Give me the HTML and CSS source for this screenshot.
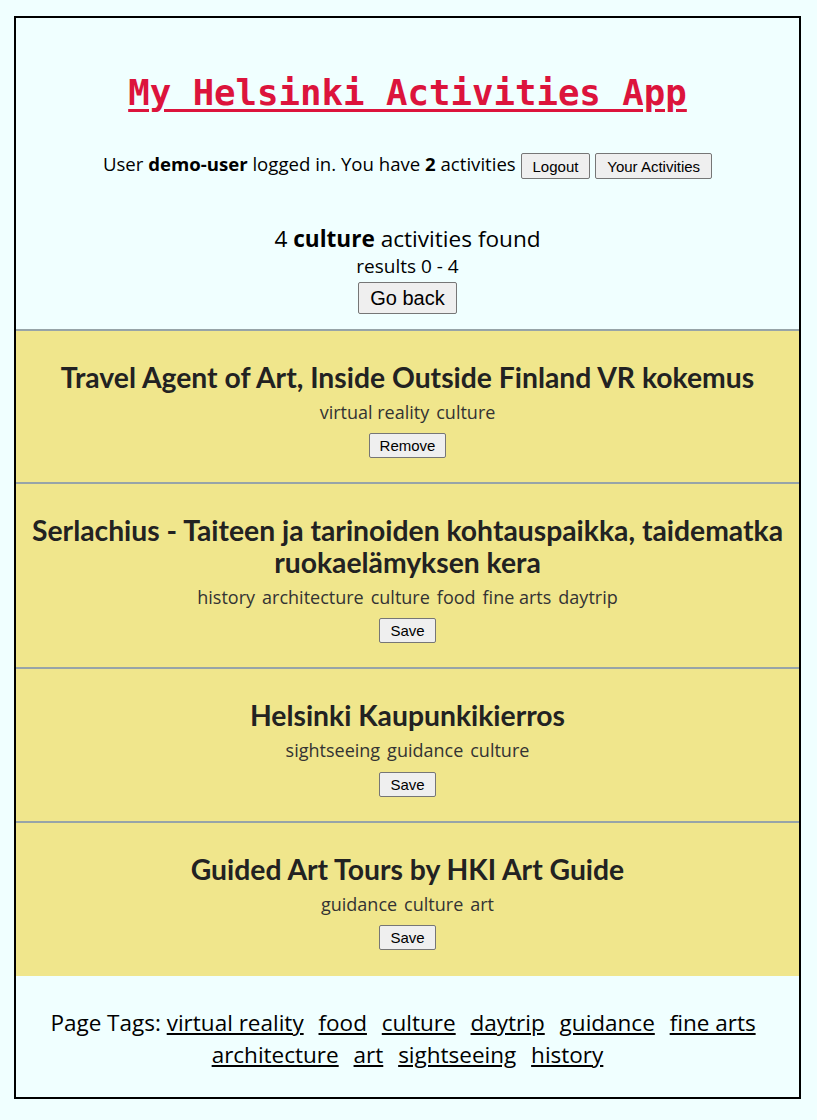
FILE: index.html
```html
<!DOCTYPE html>
<html>
<head>
<meta charset="utf-8">
<link rel="stylesheet" href="styles.css">
</head>
<body>
<div class="app">
  <header class="top">
    <h1 class="title"><a href="#">My Helsinki Activities App</a></h1>
    <p class="userline">User <b>demo-user</b> logged in. You have <b>2</b> activities <button class="btn">Logout</button> <button class="btn">Your Activities</button></p>
    <div class="found">4 <b>culture</b> activities found</div>
    <div class="results">results 0 - 4</div>
    <button class="btn big">Go back</button>
  </header>
  <section class="card">
    <h2>Travel Agent of Art, Inside Outside Finland VR kokemus</h2>
    <div class="tags"><span>virtual reality</span><span>culture</span></div>
    <button class="btn">Remove</button>
  </section>
  <section class="card">
    <h2>Serlachius - Taiteen ja tarinoiden kohtauspaikka, taidematka ruokaelämyksen kera</h2>
    <div class="tags"><span>history</span><span>architecture</span><span>culture</span><span>food</span><span>fine arts</span><span>daytrip</span></div>
    <button class="btn">Save</button>
  </section>
  <section class="card">
    <h2>Helsinki Kaupunkikierros</h2>
    <div class="tags"><span>sightseeing</span><span>guidance</span><span>culture</span></div>
    <button class="btn">Save</button>
  </section>
  <section class="card last">
    <h2>Guided Art Tours by HKI Art Guide</h2>
    <div class="tags"><span>guidance</span><span>culture</span><span>art</span></div>
    <button class="btn">Save</button>
  </section>
  <footer class="foot">
    <p>Page Tags: <a href="#">virtual reality</a> <a href="#">food</a> <a href="#">culture</a> <a href="#">daytrip</a> <a href="#">guidance</a> <a href="#">fine arts</a> <a href="#">architecture</a> <a href="#">art</a> <a href="#">sightseeing</a> <a href="#">history</a></p>
  </footer>
</div>
</body>
</html>
```
FILE: styles.css
```css
html, body {
  margin: 0;
  padding: 0;
  background: #f0ffff;
}
body {
  font-family: "Open Sans", "Noto Sans", sans-serif;
  color: #000;
}
.app {
  margin: 16px 16px 20px 14px;
  border: 2px solid #000;
  text-align: center;
}
.top {
  padding: 54px 0 15px;
}
.title {
  margin: 0;
  font-family: "DejaVu Sans Mono", monospace;
  font-size: 35.7px;
  line-height: 42px;
  font-weight: bold;
}
.title a {
  color: #dc143c;
  text-decoration: underline;
  text-decoration-thickness: 3px;
  text-underline-offset: 4px;
}
.userline {
  margin: 36px 0 0;
  font-size: 18.6px;
  line-height: 28px;
}
.found {
  margin-top: 45px;
  font-size: 22.6px;
  line-height: 30px;
}
.results {
  font-size: 19px;
  line-height: 24px;
}
.btn {
  font-family: "Liberation Sans", Arial, sans-serif;
  font-size: 15px;
  background: #efefef;
  border: 1px solid #767676;
  border-radius: 2px;
  padding: 2px 11px;
  height: 26px;
  color: #000;
  vertical-align: middle;
}
.btn.big {
  font-size: 20px;
  height: 32px;
  padding: 1px 11px;
  margin-top: 4px;
}
.card {
  background: #f0e68c;
  border-top: 2px solid #97a4a8;
  padding: 30px 8px 24px;
}
.card.last {
  padding-bottom: 26px;
}
.card h2 {
  margin: 0 0 7px;
  font-family: "Lato", sans-serif;
  font-weight: 700;
  font-size: 28.3px;
  line-height: 32px;
  color: #222;
}
.tags {
  font-size: 18px;
  line-height: 24px;
  color: #333;
  margin-bottom: 9px;
}
.tags span {
  margin: 0 3.5px;
}
.card .btn {
  height: 25px;
  padding: 1px 10px;
}
.foot {
  padding: 31px 20px 26px;
}
.foot p {
  margin: 0;
  font-size: 22.5px;
  line-height: 32px;
}
.foot a {
  color: #000;
  text-decoration: underline;
  margin-right: 9px;
}
.foot a:last-child {
  margin-right: 0;
}
```
